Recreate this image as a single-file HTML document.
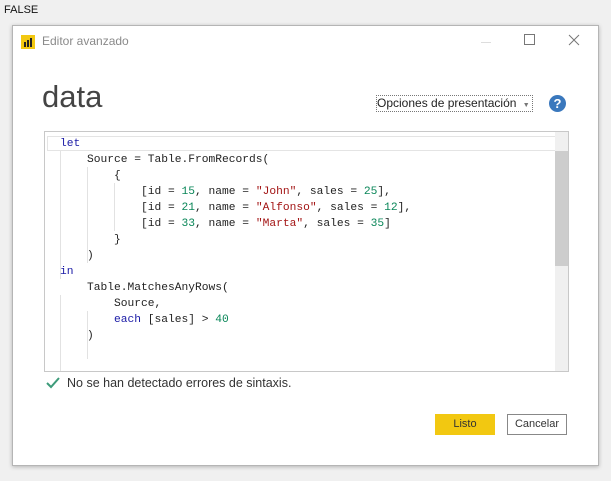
<!DOCTYPE html>
<html><head><style>
body{margin:0;width:611px;height:481px;background:#f0f0f0;font-family:"Liberation Sans",sans-serif;position:relative;overflow:hidden}
.abs{position:absolute}
#dlg{left:12px;top:25px;width:585px;height:439px;background:#fff;border:1px solid #b5b5b5;box-shadow:0 1px 4px rgba(0,0,0,.25)}
pre{margin:0;font-family:"Liberation Mono",monospace;font-size:11.25px;line-height:16px;color:#222}
.k{color:#1a1aa6}.n{color:#098658}.s{color:#a31515}
.g{position:absolute;width:0;border-left:1px solid #e2e2e2}
</style></head><body>
<div class="abs" style="left:4px;top:4px;font-size:11px;color:#111">FALSE</div>
<div id="dlg" class="abs">
 <div class="abs" style="left:8px;top:9px;width:14px;height:14px;background:#f2c811"></div>
 <svg class="abs" style="left:8px;top:9px" width="14" height="14"><rect x="3" y="7" width="2" height="5" fill="#222"/><rect x="6" y="5" width="2" height="7" fill="#222"/><rect x="9" y="3" width="2" height="9" fill="#222"/></svg>
 <div class="abs" style="left:29px;top:8px;font-size:12px;color:#8a8a8a">Editor avanzado</div>
 <div class="abs" style="left:468px;top:16px;width:10px;border-top:1px solid #ddd"></div>
 <div class="abs" style="left:511px;top:8px;width:9px;height:9px;border:1px solid #777"></div>
 <svg class="abs" style="left:555px;top:8px" width="12" height="12"><path d="M1 1L11 11M11 1L1 11" stroke="#777" stroke-width="1"/></svg>
 <div class="abs" style="left:29px;top:53px;font-size:31px;color:#444">data</div>
 <div class="abs" style="left:363px;top:69px;width:155px;height:15px;border:1px dotted #777;font-size:12px;color:#222;line-height:15px">Opciones de presentación <span style="font-size:7px;color:#777;margin-left:3px">▼</span></div>
 <div class="abs" style="left:536px;top:69px;width:17px;height:17px;border-radius:50%;background:#3a78bd;color:#fff;font-weight:bold;font-size:13px;text-align:center;line-height:17px">?</div>
 <div class="abs" style="left:31px;top:105px;width:523px;height:239px;border:1px solid #c8c8c8;overflow:hidden">
  <div class="abs" style="left:2px;top:4px;width:508px;height:13px;border:1px solid #e4e4e4"></div>
  <div class="abs" style="left:510px;top:0;width:13px;height:239px;background:#f0f0f0"></div>
  <div class="abs" style="left:510px;top:19px;width:13px;height:115px;background:#cdcdcd"></div>
  <div class="g" style="left:15px;top:19px;height:128px"></div>
  <div class="g" style="left:15px;top:163px;height:80px"></div>
  <div class="g" style="left:42px;top:35px;height:96px"></div>
  <div class="g" style="left:42px;top:179px;height:48px"></div>
  <div class="g" style="left:69px;top:51px;height:48px"></div>
  <pre class="abs" style="left:15px;top:4px"><span class="k">let</span>
    Source = Table.FromRecords(
        {
            [id = <span class="n">15</span>, name = <span class="s">"John"</span>, sales = <span class="n">25</span>],
            [id = <span class="n">21</span>, name = <span class="s">"Alfonso"</span>, sales = <span class="n">12</span>],
            [id = <span class="n">33</span>, name = <span class="s">"Marta"</span>, sales = <span class="n">35</span>]
        }
    )
<span class="k">in</span>
    Table.MatchesAnyRows(
        Source,
        <span class="k">each</span> [sales] &gt; <span class="n">40</span>
    )</pre>
 </div>
 <svg class="abs" style="left:33px;top:351px" width="14" height="12"><path d="M1 6L5 10L13 1" stroke="#3d9b7a" stroke-width="2" fill="none"/></svg>
 <div class="abs" style="left:54px;top:350px;font-size:12.5px;color:#333">No se han detectado errores de sintaxis.</div>
 <div class="abs" style="left:422px;top:388px;width:60px;height:21px;background:#f2c811;font-size:11px;color:#333;text-align:center;line-height:21px">Listo</div>
 <div class="abs" style="left:494px;top:388px;width:58px;height:19px;border:1px solid #888;font-size:11px;color:#333;text-align:center;line-height:19px">Cancelar</div>
</div>
</body></html>
